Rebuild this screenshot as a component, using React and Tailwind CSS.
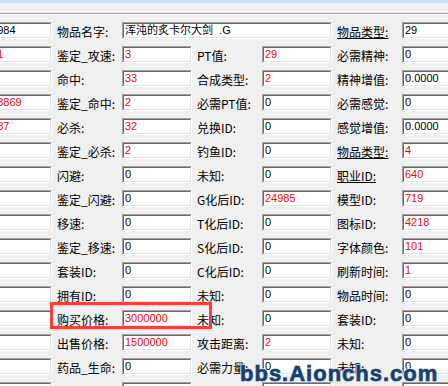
const LBL = "font-['Noto_Sans_CJK_SC',sans-serif] text-[12px] leading-[12px] text-black"
const VAL = "font-['Liberation_Sans','Noto_Sans_CJK_SC',sans-serif] text-[11px] leading-[11px]"

const r = (v) => ({ v, red: true })

// [label, value, underlined]
const rows = [
  { c0: '40984', c1: ['物品名字:', '浑沌的炙卡尔大剑  .G'], wide: true, c3: ['物品类型:', '29', true] },
  { c0: r('101'), c1: ['鉴定_攻速:', r('3')], c2: ['PT值:', r('29')], c3: ['必需精神:', '0'] },
  { c0: '', c1: ['命中:', r('33')], c2: ['合成类型:', r('2')], c3: ['精神增值:', '0.0000'] },
  { c0: r('123869'), c1: ['鉴定_命中:', r('2')], c2: ['必需PT值:', '0'], c3: ['必需感觉:', '0'] },
  { c0: r('2087'), c1: ['必杀:', r('32')], c2: ['兑换ID:', '0'], c3: ['感觉增值:', '0.0000'] },
  { c0: '', c1: ['鉴定_必杀:', r('2')], c2: ['钓鱼ID:', '0'], c3: ['物品类型:', r('4'), true] },
  { c0: '', c1: ['闪避:', '0'], c2: ['未知:', '0'], c3: ['职业ID:', r('640'), true] },
  { c0: '', c1: ['鉴定_闪避:', '0'], c2: ['G化后ID:', r('24985')], c3: ['模型ID:', r('719')] },
  { c0: '', c1: ['移速:', '0'], c2: ['T化后ID:', '0'], c3: ['图标ID:', r('4218')] },
  { c0: '', c1: ['鉴定_移速:', '0'], c2: ['S化后ID:', '0'], c3: ['字体颜色:', r('101')] },
  { c0: '', c1: ['套装ID:', '0'], c2: ['C化后ID:', '0'], c3: ['刷新时间:', r('1')] },
  { c0: '', c1: ['拥有ID:', '0'], c2: ['未知:', '0'], c3: ['物品时间:', '0'] },
  { c0: '', c1: ['购买价格:', r('3000000')], c2: ['未知:', '0'], c3: ['套装ID:', '0'] },
  { c0: '', c1: ['出售价格:', r('1500000')], c2: ['攻击距离:', r('2')], c3: ['未知:', '0'] },
  { c0: '', c1: ['药品_生命:', '0'], c2: ['必需力量:', '0'], c3: ['未知:', '0'] },
  { c0: '', c1: ['', '0'], c2: ['', '0.0000'], c3: ['', r('3347')] },
]

function Box({ value, wide }) {
  const v = typeof value === 'object' ? value.v : value
  const red = typeof value === 'object' && value.red
  return (
    <div
      className={`h-[17px] shrink-0 border border-t-[#a0a0a0] border-l-[#a0a0a0] border-b-white border-r-white ${
        wide ? 'w-[210px]' : 'w-[70px]'
      }`}
    >
      <div
        className={`${VAL} h-full overflow-hidden whitespace-pre border border-t-[#696969] border-l-[#696969] border-b-[#e3e3e3] border-r-[#e3e3e3] bg-white pl-[1px] pt-px ${
          red ? 'text-[#ff0000]' : 'text-black'
        } ${wide ? 'text-[10.5px]' : ''}`}
      >
        {v}
      </div>
    </div>
  )
}

function Label({ text, u }) {
  return (
    <div className={`${LBL} ml-[5px] w-[65px] shrink-0 whitespace-nowrap pt-[4px] ${u ? 'underline' : ''}`}>
      {text}
    </div>
  )
}

export default function App() {
  return (
    <div className="relative h-[386px] w-[448px] overflow-hidden bg-[#f0f0f0]">
      <div className="h-[3px] bg-[#c9ddf2]" />
      <div className="h-[10px]" />
      <div className="h-px bg-[#a0a0a0]" />
      <div className="h-px bg-white" />

      <div className="flex flex-col gap-[7px] pt-[7px]">
        {rows.map((row, i) => (
          <div key={i} className="-ml-[18px] flex h-[17px] items-start">
            <Box value={row.c0} />
            <Label text={row.c1[0]} />
            <Box value={row.c1[1]} wide={row.wide} />
            {!row.wide && (
              <>
                <Label text={row.c2[0]} />
                <Box value={row.c2[1]} />
              </>
            )}
            <Label text={row.c3[0]} u={row.c3[2]} />
            <Box value={row.c3[1]} />
          </div>
        ))}
      </div>

      <div className="absolute left-[50px] top-[302px] h-[27px] w-[162px] border-[3px] border-[#ff3d3d]" />

      <div className="absolute left-[240px] top-[363px] whitespace-nowrap font-['Liberation_Sans',sans-serif] text-[22px] font-bold leading-[22px] tracking-[1px] text-[#173f70] [-webkit-text-stroke:0.6px_#173f70] [text-shadow:1px_0_0_#e8eef5,-1px_0_0_#e8eef5,0_1px_0_#e8eef5,0_-1px_0_#e8eef5]">
        bbs.Aionchs.com
      </div>
    </div>
  )
}
